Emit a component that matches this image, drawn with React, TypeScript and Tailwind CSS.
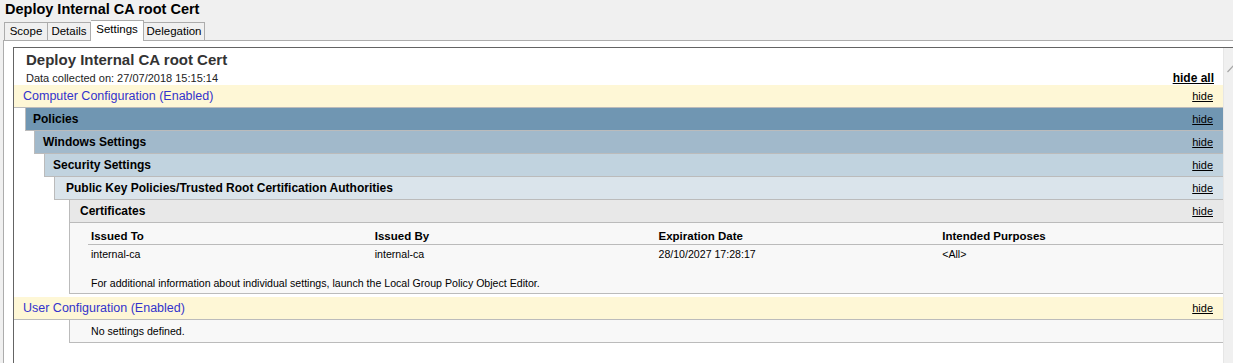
import React from "react";

const font = { fontFamily: '"Liberation Sans", Arial, sans-serif' };

function Hide() {
  return <span className="text-[11px] underline text-black">hide</span>;
}

export default function App() {
  const sections = [
    { label: "Policies", cls: "ml-[11px] bg-[#7096b2] pl-[7px]" },
    { label: "Windows Settings", cls: "ml-[20px] bg-[#a1b9cb] pl-[8px]" },
    { label: "Security Settings", cls: "ml-[30px] bg-[#c1d3df] pl-[8px]" },
    { label: "Public Key Policies/Trusted Root Certification Authorities", cls: "ml-[40px] bg-[#dae4eb] pl-[11px]" },
    { label: "Certificates", cls: "ml-[55px] bg-[#e8e8e8] pl-[10px]" },
  ];
  return (
    <div style={font} className="w-[1233px] h-[363px] overflow-hidden bg-[#f0f0f0] flex flex-col text-black">
      <div className="h-[20px] pl-[5px] text-[14.5px] font-bold leading-[18px]">Deploy Internal CA root Cert</div>
      <div className="h-[20px] flex items-end pl-[4px] relative z-10">
        <div className="w-[44px] h-[18px] border border-b-0 border-[#acacac] text-[11.5px] flex items-center justify-center">Scope</div>
        <div className="w-[43px] h-[18px] border border-b-0 border-l-0 border-[#acacac] text-[11.5px] flex items-center justify-center">Details</div>
        <div className="w-[53px] h-[21px] -mb-px border border-b-0 border-l-0 border-[#acacac] bg-white text-[11.5px] flex items-center justify-center pb-[2px]">Settings</div>
        <div className="w-[61px] h-[18px] border border-b-0 border-l-0 border-[#acacac] text-[11.5px] flex items-center justify-center">Delegation</div>
      </div>
      <div className="flex-1 ml-[3px] border-l border-t border-[#acacac] bg-white pl-[9px] pt-[6px] flex flex-col">
        <div className="flex-1 border-l border-t border-[#646464] flex">
          <div className="flex-1 flex flex-col">
            <div className="pl-[12px] mt-[3px] h-[18px] leading-[18px] text-[15px] font-bold text-[#333]">Deploy Internal CA root Cert</div>
            <div className="mt-[3px] h-[13px] flex items-center justify-between pl-[12px] pr-[9px]">
              <span className="text-[11px] leading-[13px] text-[#222]">Data collected on: 27/07/2018 15:15:14</span>
              <span className="text-[12px] leading-[13px] font-bold underline">hide all</span>
            </div>
            <div className="h-[22px] box-content border-b border-[#bbbbbb] bg-[#fef7d6] flex items-center justify-between pl-[9px] pr-[10px]">
              <span className="text-[12.5px] text-[#3333cc]">Computer Configuration (Enabled)</span>
              <Hide />
            </div>
            {sections.map((s) => (
              <div key={s.label} className={`h-[22px] box-content border-l border-b border-[#bbbbbb] flex items-center justify-between pr-[10px] ${s.cls}`}>
                <span className="text-[12px] font-bold">{s.label}</span>
                <Hide />
              </div>
            ))}
            <div className="ml-[55px] border-l border-b border-[#bbbbbb] bg-[#f8f8f8] pt-[5px] pb-[3px] pl-[18px]">
              <div className="grid grid-cols-4 h-[16px] box-content border-b border-[#bbbbbb] text-[11.5px] leading-[16px] font-bold">
                <div className="pl-[3px]">Issued To</div>
                <div className="pl-[3px]">Issued By</div>
                <div className="pl-[3px]">Expiration Date</div>
                <div className="pl-[3px]">Intended Purposes</div>
              </div>
              <div className="grid grid-cols-4 h-[18px] text-[10.6px] leading-[18px]">
                <div className="pl-[3px]">internal-ca</div>
                <div className="pl-[3px]">internal-ca</div>
                <div className="pl-[3px]">28/10/2027 17:28:17</div>
                <div className="pl-[3px]">&lt;All&gt;</div>
              </div>
              <div className="mt-[13px] pl-[3px] text-[10.6px] leading-[14px]">
                For additional information about individual settings, launch the Local Group Policy Object Editor.
              </div>
            </div>
            <div className="mt-[3px] h-[22px] box-content border-b border-[#bbbbbb] bg-[#fef7d6] flex items-center justify-between pl-[9px] pr-[10px]">
              <span className="text-[12.5px] text-[#3333cc]">User Configuration (Enabled)</span>
              <Hide />
            </div>
            <div className="ml-[55px] h-[22px] box-content border-l border-b border-[#bbbbbb] bg-[#f8f8f8] pl-[21px] text-[10.6px] leading-[22px]">
              No settings defined.
            </div>
          </div>
          <div className="w-[10px] bg-[#f0f0f0] border-l border-[#e6e6e6]">
            <svg width="10" height="30" viewBox="0 0 10 30">
              <line x1="3.5" y1="24" x2="10" y2="17" stroke="#a6a6a6" strokeWidth="1.2" />
            </svg>
          </div>
        </div>
      </div>
    </div>
  );
}
